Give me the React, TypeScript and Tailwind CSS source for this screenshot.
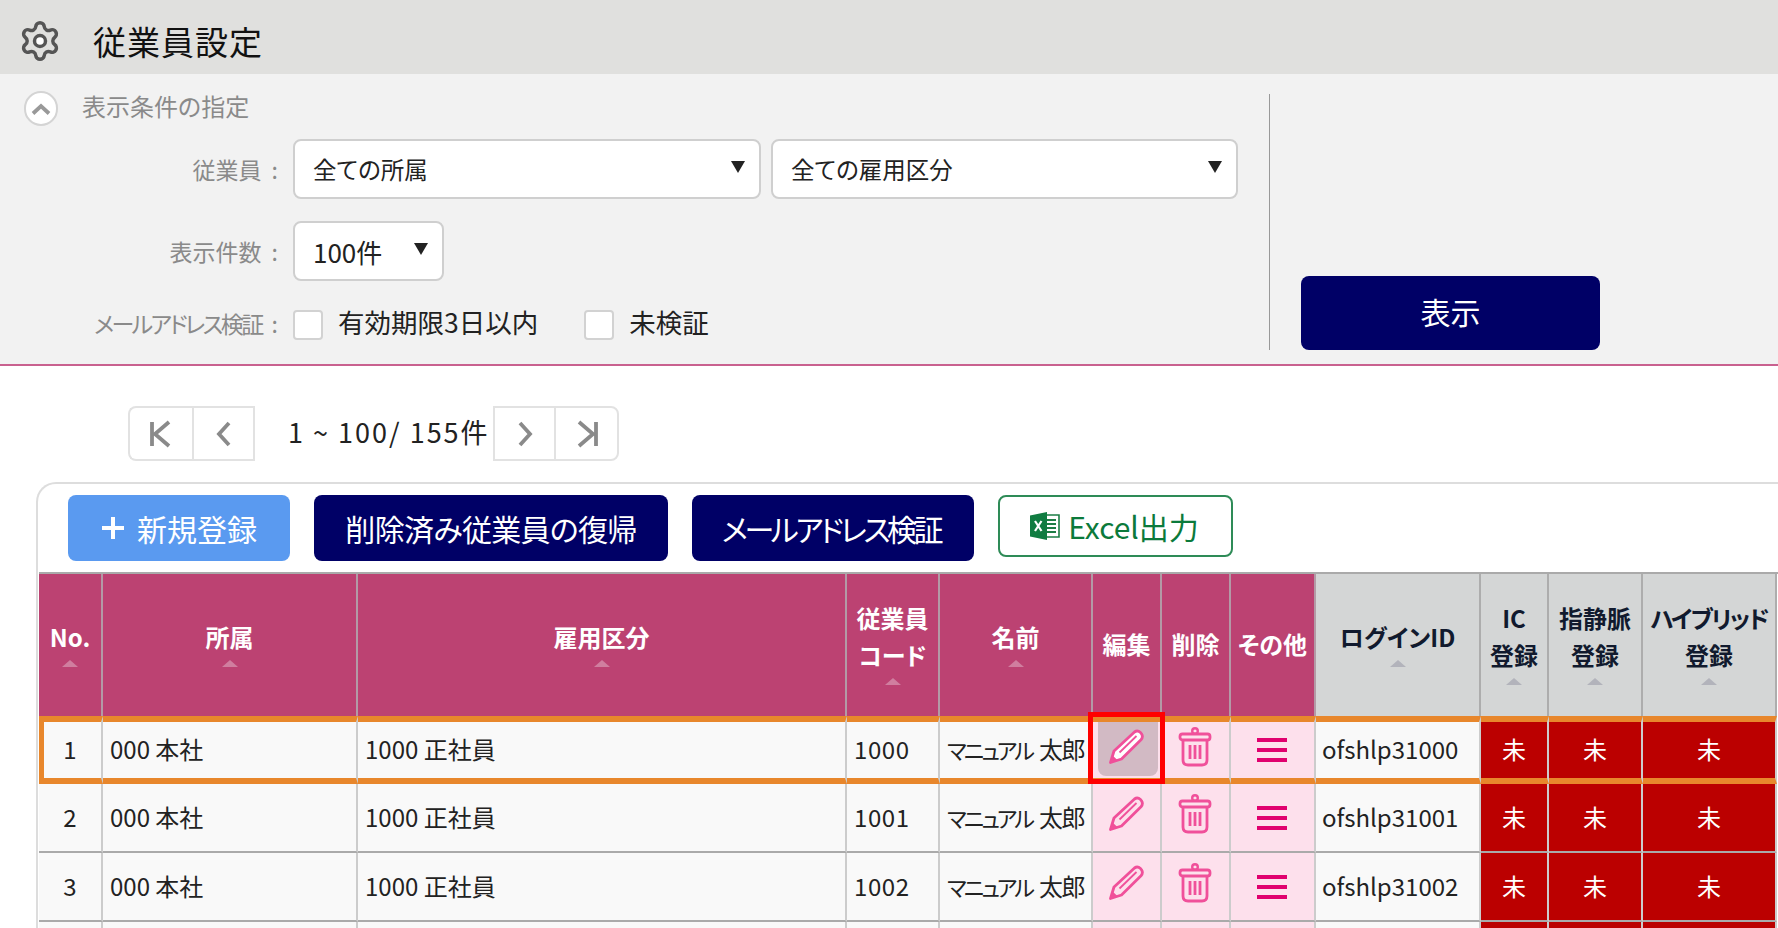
import { Settings } from 'lucide-react';

const cellText = 'border-r-2 border-r-[#cccccc] text-[24px] text-[#222] whitespace-nowrap overflow-hidden';
const tdBase = `${cellText} px-[7px] pb-[2px]`;

function SelectBox({ label, width, textSize }: { label: string; width: string; textSize: string }) {
    return (
        <div className={`${width} h-[60px] pl-[18px] pr-[14px] flex items-center justify-between bg-white border-2 border-[#cfcfcf] rounded-[8px]`}>
            <span className={`${textSize} text-[#222] mt-[1px]`}>{label}</span>
            <span className="w-0 h-0 border-x-[7px] border-x-transparent border-t-[12px] border-t-[#222] mb-[4px]"></span>
        </div>
    );
}

function CheckBox({ label }: { label: string }) {
    return (
        <div className="flex items-center gap-[15px]">
            <div className="w-[30px] h-[30px] bg-white border-2 border-[#d2d2d2] rounded-[4px]"></div>
            <span className="text-[26.5px] text-[#222] -mt-[6px]">{label}</span>
        </div>
    );
}

function FieldLabel({ text, className }: { text: string; className?: string }) {
    return (
        <label className={`text-right text-[23px] text-[#8a8a8a] whitespace-nowrap ${className ?? ''}`}>
            {text}
            <span className="ml-[10px] tracking-normal">:</span>
        </label>
    );
}

function SortMark({ dark }: { dark?: boolean }) {
    return (
        <div className={`mx-auto mt-[2px] w-0 h-0 border-x-[8px] border-x-transparent border-b-[7px] ${dark ? 'border-b-[#b2b3bb]' : 'border-b-[#d07e9f]'}`}></div>
    );
}

function PencilIcon({ filled }: { filled?: boolean }) {
    return (
        <svg width="36" height="36" viewBox="0 0 36 36" className="relative mx-auto mb-[7px]" fill="none">
            <path
                d="M2.5 33.5 L6 22 L26.5 3 Q29.5 0.8 32.5 3.5 L33.5 4.8 Q35.5 8 33 10.8 L13.5 30 Z"
                fill={filled ? '#ffffff' : 'none'}
                stroke="#f0509a"
                strokeWidth="2.8"
                strokeLinejoin="round"
            />
            <path d="M11.5 23.5 L28.5 7" stroke="#f0509a" strokeWidth="1.8" />
            <path d="M2.5 33.5 L4.5 26.5 L9.5 31 Z" fill="#f0509a" />
        </svg>
    );
}

function TrashIcon() {
    return (
        <svg width="34" height="40" viewBox="0 0 34 40" className="mx-auto mb-[7px]" fill="none" stroke="#f0509a">
            <circle cx="17" cy="4" r="2.8" strokeWidth="2.4" />
            <rect x="2" y="7" width="30" height="6" rx="2.5" strokeWidth="2.8" />
            <path d="M5 13 V33 Q5 38 10 38 H24 Q29 38 29 33 V13" strokeWidth="2.8" />
            <path d="M12 18 V32 M17 18 V32 M22 18 V32" strokeWidth="2.8" />
        </svg>
    );
}

function MenuIcon() {
    return (
        <svg width="30" height="26" viewBox="0 0 30 26" className="mx-auto">
            <path d="M0 3 H30 M0 13 H30 M0 23 H30" stroke="#e0006e" strokeWidth="3.8" />
        </svg>
    );
}

function ExcelIcon() {
    return (
        <svg width="30" height="28" viewBox="0 0 30 28">
            <path d="M14 3 H29 V25 H14 Z" fill="#ffffff" stroke="#1d7d45" strokeWidth="1.6" />
            <path d="M17 8 H26 M17 12 H26 M17 16 H26 M17 20 H26" stroke="#1d7d45" strokeWidth="2.2" />
            <path d="M0 3.5 L17 0 V28 L0 24.5 Z" fill="#107c41" />
            <path d="M5 9 L11.5 19 M11.5 9 L5 19" stroke="#ffffff" strokeWidth="2.2" />
        </svg>
    );
}

function PagerIcon({ d }: { d: string }) {
    return (
        <svg width="28" height="30" viewBox="0 0 28 30" fill="none" stroke="#8a8a8a" strokeWidth="3.8">
            <path d={d} />
        </svg>
    );
}

const headers = [
    { lines: ['No.'], sort: true },
    { lines: ['所属'], sort: true },
    { lines: ['雇用区分'], sort: true },
    { lines: ['従業員', 'コード'], sort: true },
    { lines: ['名前'], sort: true },
    { lines: ['編集'], sort: false },
    { lines: ['削除'], sort: false },
    { lines: ['その他'], sort: false },
    { lines: ['ログインID'], sort: true, gray: true },
    { lines: ['IC', '登録'], sort: true, gray: true },
    { lines: ['指静脈', '登録'], sort: true, gray: true },
    { lines: ['ハイブリッド', '登録'], sort: true, gray: true },
];

const rows = [
    { no: 1, code: '1000', login: 'ofshlp31000' },
    { no: 2, code: '1001', login: 'ofshlp31001' },
    { no: 3, code: '1002', login: 'ofshlp31002' },
];

export default function App() {
    return (
        <div className="w-[1778px] h-[928px] overflow-hidden bg-white font-['Noto_Sans_CJK_JP','Noto_Sans',sans-serif] [font-feature-settings:'palt']">
            {/* Title bar */}
            <div className="h-[74px] bg-[#e0e0de] flex items-center pl-[18px]">
                <Settings size={44} strokeWidth={1.9} className="text-[#555] mt-[8px] [&>circle]:fill-white" />
                <h1 className="ml-[31px] mt-[9px] text-[33px] text-[#111] tracking-[1px]">従業員設定</h1>
            </div>

            {/* Filter panel */}
            <div className="h-[292px] bg-[#f2f2f2] border-b-2 border-[#c9618f] flex">
                <div className="w-[1269px] pt-[17px] pl-[24px]">
                    <div className="flex items-center">
                        <div className="w-[34px] h-[35px] rounded-full bg-white border-2 border-[#d4d4d4] flex items-center justify-center">
                            <svg width="20" height="12" viewBox="0 0 20 12" fill="none" stroke="#999" strokeWidth="3.8">
                                <path d="M2 10.5 L10 3 L18 10.5" />
                            </svg>
                        </div>
                        <span className="ml-[24px] text-[24px] text-[#8a8a8a] -mt-[6px]">表示条件の指定</span>
                    </div>
                    <div className="mt-[13px] grid grid-cols-[254px_1fr] gap-x-[15px] items-center">
                        <FieldLabel text="従業員" />
                        <div className="flex gap-[10px]">
                            <SelectBox label="全ての所属" width="w-[468px]" textSize="text-[23.5px]" />
                            <SelectBox label="全ての雇用区分" width="w-[467px]" textSize="text-[23.5px]" />
                        </div>
                        <FieldLabel text="表示件数" className="mt-[22px]" />
                        <div className="mt-[22px] flex">
                            <SelectBox label="100件" width="w-[151px]" textSize="text-[26px]" />
                        </div>
                        <FieldLabel text="メールアドレス検証" className="mt-[23px] tracking-[-2.6px]" />
                        <div className="mt-[27px] flex gap-[46px]">
                            <CheckBox label="有効期限3日以内" />
                            <CheckBox label="未検証" />
                        </div>
                    </div>
                </div>
                <div className="w-px bg-[#999] mt-[20px] mb-[14px]"></div>
                <div className="pl-[31px] flex items-end pb-[14px]">
                    <button className="w-[299px] h-[74px] pb-[3px] bg-[#000066] rounded-[8px] text-white text-[30px]">表示</button>
                </div>
            </div>

            {/* Pager */}
            <div className="mt-[40px] ml-[128px] flex items-center h-[55px]">
                <div className="w-[127px] h-full flex border-2 border-[#e2e2e2] border-r-0 rounded-l-[8px]">
                    <div className="w-[64px] flex items-center justify-center border-r-2 border-[#e2e2e2]">
                        <PagerIcon d="M5 3 V27 M22 3 L8 15 L22 27" />
                    </div>
                    <div className="flex-1 flex items-center justify-center border-r-2 border-[#e2e2e2]">
                        <PagerIcon d="M19 4 L9 15 L19 26" />
                    </div>
                </div>
                <span className="w-[238px] pl-[33px] text-[27px] tracking-[2px] text-[#222] -mt-[3px] whitespace-nowrap">1 ~ 100/ 155件</span>
                <div className="w-[126px] h-full flex border-2 border-[#e2e2e2] border-l-2 rounded-r-[8px]">
                    <div className="w-[61px] flex items-center justify-center border-r-2 border-[#e2e2e2]">
                        <PagerIcon d="M9 4 L19 15 L9 26" />
                    </div>
                    <div className="flex-1 flex items-center justify-center">
                        <PagerIcon d="M23 3 V27 M6 3 L20 15 L6 27" />
                    </div>
                </div>
            </div>

            {/* List card */}
            <div className="mt-[21px] ml-[36px] w-[1742px] border-l-2 border-t-2 border-[#dddddd] rounded-tl-[20px]">
                <div className="pt-[11px] pl-[30px] h-[89px] flex items-start">
                    <button className="w-[222px] h-[66px] bg-[#5a9af0] rounded-[8px] text-white text-[30px] flex items-center justify-center gap-[12px]">
                        <svg width="24" height="24" viewBox="0 0 24 24" stroke="#fff" strokeWidth="4">
                            <path d="M12 1 V23 M1 12 H23" />
                        </svg>
                        <span>新規登録</span>
                    </button>
                    <button className="ml-[24px] w-[354px] h-[66px] bg-[#000066] rounded-[8px] text-white text-[30px] tracking-[-0.7px]">削除済み従業員の復帰</button>
                    <button className="ml-[24px] w-[282px] h-[66px] pr-[4px] bg-[#000066] rounded-[8px] text-white text-[30px] tracking-[-3.4px]">メールアドレス検証</button>
                    <button className="ml-[24px] w-[235px] h-[62px] pr-[2px] bg-white border-2 border-[#2e8b57] rounded-[8px] text-[#0b7a3b] text-[30px] flex items-center justify-center gap-[8px]">
                        <ExcelIcon />
                        <span>Excel出力</span>
                    </button>
                </div>

                <div className="relative ml-[1px] border-t-2 border-[#aaaaaa] -mt-[1px]">
                    <table className="table-fixed border-separate border-spacing-0 w-[1738px]">
                        <colgroup>
                            <col className="w-[64px]" />
                            <col className="w-[255px]" />
                            <col className="w-[489px]" />
                            <col className="w-[93px]" />
                            <col className="w-[153px]" />
                            <col className="w-[69px]" />
                            <col className="w-[69px]" />
                            <col className="w-[85px]" />
                            <col className="w-[165px]" />
                            <col className="w-[68px]" />
                            <col className="w-[94px]" />
                            <col className="w-[134px]" />
                        </colgroup>
                        <thead>
                            <tr>
                                {headers.map((h) => (
                                    <th
                                        key={h.lines.join('')}
                                        className={`h-[142px] p-0 pb-[3px] border-r-2 align-middle text-center text-[24px] font-bold leading-[37px] whitespace-nowrap ${
                                            h.gray
                                                ? 'bg-[#d4d6d6] text-[#111a2e] border-r-[#adadad]'
                                                : 'bg-[#bc4272] text-white border-r-[#b39aa6]'
                                        }`}
                                    >
                                        {h.lines.map((line) => (
                                            <div
                                                key={line}
                                                className={`${h.sort ? '-translate-y-[3px]' : ''} ${line === 'ハイブリッド' ? 'tracking-[-1.8px]' : ''}`}
                                            >
                                                {line}
                                            </div>
                                        ))}
                                        {h.sort && <SortMark dark={h.gray} />}
                                    </th>
                                ))}
                            </tr>
                        </thead>
                        <tbody>
                            {rows.map((row, i) => {
                                // first row is the highlighted one
                                const edge =
                                    i === 0
                                        ? 'h-[68px] border-y-[6px] border-y-[#e8872c]'
                                        : 'h-[69px] border-b-2 border-b-[#aaaaaa]';
                                const plain = `${tdBase} ${edge} bg-[#f9f9f9]`;
                                const action = `${cellText} ${edge} pl-[6px] pr-[8px] bg-[#fde0ec] text-center`;
                                const red = `${tdBase} ${edge} bg-[#bb0000] text-center text-white`;
                                return (
                                    <tr key={row.no}>
                                        <td className={`${plain} text-center ${i === 0 ? 'border-l-[5px] border-l-[#e8872c] pr-[12px]' : ''}`}>{row.no}</td>
                                        <td className={plain}>000 本社</td>
                                        <td className={plain}>1000 正社員</td>
                                        <td className={`${plain} tracking-[0.6px]`}>{row.code}</td>
                                        <td className={plain}>
                                            <span className="text-[22px] tracking-[-2.8px]">マニュアル</span>
                                            <span className="ml-[7px] tracking-[-1.5px]">太郎</span>
                                        </td>
                                        <td className={`${action} relative`}>
                                            {i === 0 && (
                                                <div className="absolute -top-[6px] left-[5px] w-[60px] h-[60px] bg-black/17 rounded-b-[8px]"></div>
                                            )}
                                            <PencilIcon filled={i === 0} />
                                        </td>
                                        <td className={action}>
                                            <TrashIcon />
                                        </td>
                                        <td className={action}>
                                            <MenuIcon />
                                        </td>
                                        <td className={`${plain} pl-[6px]`}>{row.login}</td>
                                        <td className={red}>未</td>
                                        <td className={red}>未</td>
                                        <td className={red}>未</td>
                                    </tr>
                                );
                            })}
                            {/* next row, only its top edge is on screen */}
                            <tr>
                                {headers.map((h, idx) => (
                                    <td
                                        key={h.lines.join('')}
                                        className={`h-[69px] border-r-2 border-r-[#cccccc] ${
                                            idx >= 9 ? 'bg-[#bb0000]' : idx >= 5 && idx <= 7 ? 'bg-[#fde0ec]' : 'bg-[#f9f9f9]'
                                        }`}
                                    ></td>
                                ))}
                            </tr>
                        </tbody>
                    </table>
                    {/* red callout around the edit button */}
                    <div className="absolute left-[1049px] top-[138px] w-[77px] h-[72px] border-[5px] border-[#ff0000]"></div>
                </div>
            </div>
        </div>
    );
}
